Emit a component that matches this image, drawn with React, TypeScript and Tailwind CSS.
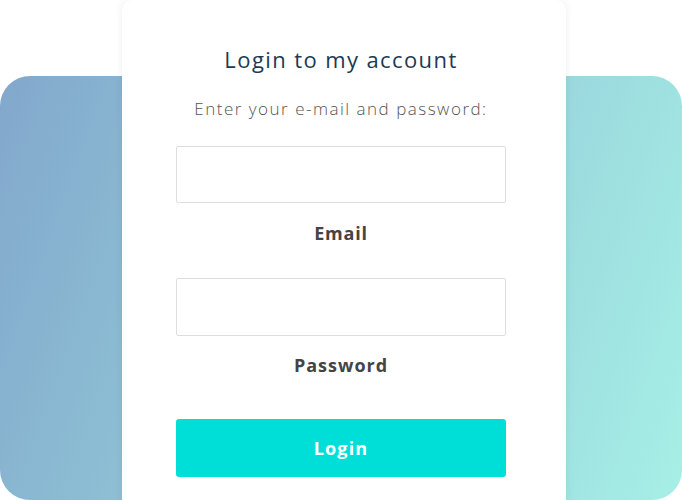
import React from "react";

const App: React.FC = () => {
  return (
    <div
      className="relative h-[500px] w-[682px] overflow-hidden bg-white"
      style={{ fontFamily: "'Open Sans', 'Noto Sans', sans-serif" }}
    >
      {/* gradient backdrop */}
      <div className="mt-[76px] h-[424px] rounded-[30px] bg-linear-[110deg] from-[#82a8cc] to-[#a6efe6]" />

      {/* login card */}
      <div className="absolute left-[122px] top-0 h-[520px] w-[444px] rounded-[10px] bg-white shadow-[0_0_8px_rgba(0,0,0,0.07)]">
        <div className="flex flex-col items-center pl-[54px] pr-[60px] pt-[43px]">
          <h1 className="text-[22px] leading-[32px] font-medium tracking-[1.4px] text-[#1d3a55]">
            Login to my account
          </h1>
          <p className="mt-[22px] text-[17px] leading-[24px] font-light tracking-[1.5px] text-[#555]">
            Enter your e-mail and password:
          </p>

          <input
            type="email"
            className="mt-[25px] h-[57px] w-full rounded-[2px] border border-[#dedede] bg-white outline-none"
          />
          <label className="mt-[18px] text-[18px] leading-[24px] font-bold tracking-[0.8px] text-[#444]">
            Email
          </label>

          <input
            type="password"
            className="mt-[33px] h-[58px] w-full rounded-[2px] border border-[#dedede] bg-white outline-none"
          />
          <label className="mt-[17px] text-[18px] leading-[24px] font-bold tracking-[1px] text-[#444]">
            Password
          </label>

          <button className="mt-[42px] h-[58px] w-full rounded-[3px] bg-[#00dfd7] text-[18px] font-bold tracking-[1.1px] text-white">
            Login
          </button>
        </div>
      </div>
    </div>
  );
};

export default App;
